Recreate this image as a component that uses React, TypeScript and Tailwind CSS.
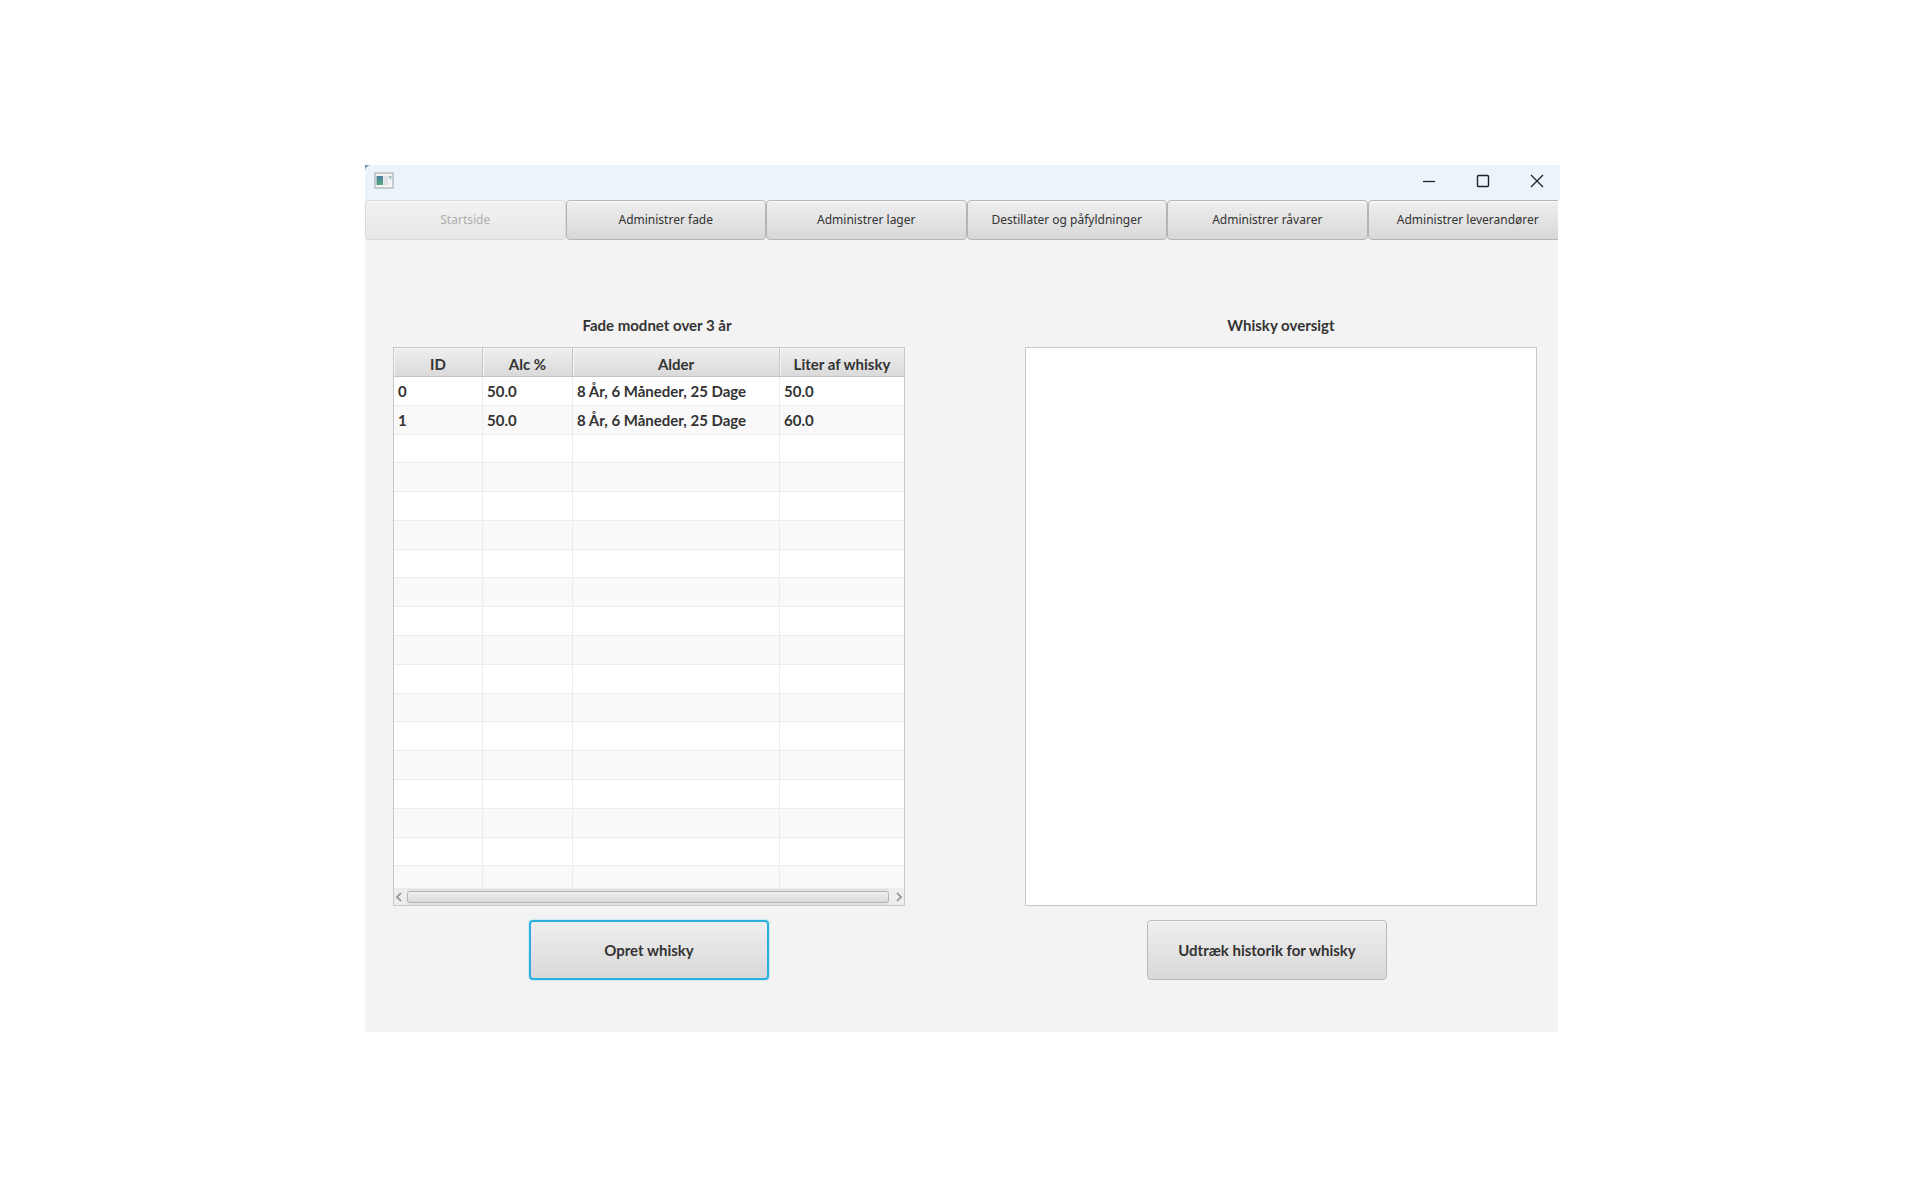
import { useState } from "react";

const tabs = [
  "Startside",
  "Administrer fade",
  "Administrer lager",
  "Destillater og påfyldninger",
  "Administrer råvarer",
  "Administrer leverandører",
];

const casks = [
  { id: "0", alc: "50.0", age: "8 År, 6 Måneder, 25 Dage", liters: "50.0" },
  { id: "1", alc: "50.0", age: "8 År, 6 Måneder, 25 Dage", liters: "60.0" },
];

const emptyRows = Array.from({ length: 16 }, (_, i) => i);

function WindowIcon() {
  return (
    <svg width="20" height="17" viewBox="0 0 20 17" aria-hidden="true">
      <defs>
        <linearGradient id="pane" x1="0" y1="0" x2="0" y2="1">
          <stop offset="0" stopColor="#4a7fa6" />
          <stop offset="1" stopColor="#58a67c" />
        </linearGradient>
      </defs>
      <rect x="1" y="1" width="18" height="15" fill="#f4f4f4" stroke="#b4b9bc" strokeWidth="1.4" />
      <rect x="2.5" y="4" width="6.5" height="9" fill="url(#pane)" />
      <rect x="9.5" y="4" width="4.5" height="9" fill="#e4e2e4" />
      <path d="M14.5 4h3v1.500l-1 2.500-1-2z" fill="#8fbfc0" />
    </svg>
  );
}

function TitleBar() {
  const control = "flex h-full w-[46px] items-center justify-center";
  return (
    <div className="bg-[#6f949c]">
      <header className="flex h-[35px] items-center justify-between rounded-tl-md bg-[#eaf4fa] pb-1 pl-[9px]">
        <WindowIcon />
        <div className="flex h-full gap-2">
          <button aria-label="Minimer" className={control}>
            <svg width="14" height="14" viewBox="0 0 14 14" fill="none" stroke="#222" strokeWidth="1.3">
              <path d="M1 7.5h12" />
            </svg>
          </button>
          <button aria-label="Maksimer" className={control}>
            <svg width="14" height="14" viewBox="0 0 14 14" fill="none" stroke="#222" strokeWidth="1.4">
              <rect x="1.500" y="1.500" width="11" height="11" rx="1" />
            </svg>
          </button>
          <button aria-label="Luk" className={control}>
            <svg width="14" height="14" viewBox="0 0 14 14" fill="none" stroke="#222" strokeWidth="1.3">
              <path d="M1 1l12 12M13 1L1 13" />
            </svg>
          </button>
        </div>
      </header>
    </div>
  );
}

function Chevron({ d }: { d: string }) {
  return (
    <svg width="6" height="10" viewBox="0 0 6 10" fill="none" stroke="#8f8f8f" strokeWidth="1.6">
      <path d={d} />
    </svg>
  );
}

function CaskTable() {
  const th = "border-r border-b border-[#c4c4c4] pt-1 pb-0 font-bold shadow-[inset_1px_1px_0_#f6f6f6] last:border-r-0";
  const td = "border-r border-b border-[#ececec] px-1 py-0 last:border-r-0";
  return (
    <div className="flex h-[559px] flex-col border border-[#c8c8c8] bg-white">
      <div className="h-[541px]">
        <table aria-labelledby="fade-title" className="h-full w-full table-fixed border-separate border-spacing-0">
          <colgroup>
            <col className="w-[89px]" />
            <col className="w-[90px]" />
            <col className="w-[207px]" />
            <col />
          </colgroup>
          <thead>
            <tr className="h-[29px] bg-linear-to-b from-[#efefef] to-[#d9d9d9]">
              <th className={th}>ID</th>
              <th className={th}>Alc %</th>
              <th className={th}>Alder</th>
              <th className={th}>Liter af whisky</th>
            </tr>
          </thead>
          <tbody>
            {casks.map((c) => (
              <tr key={c.id} className="h-7 even:bg-[#f9f9f9]">
                <td className={td}>{c.id}</td>
                <td className={td}>{c.alc}</td>
                <td className={td}>{c.age}</td>
                <td className={td}>{c.liters}</td>
              </tr>
            ))}
            {emptyRows.map((i) => (
              <tr key={i} className="h-7 even:bg-[#f9f9f9] last:h-[22px]">
                <td className={td} />
                <td className={td} />
                <td className={td} />
                <td className={td} />
              </tr>
            ))}
          </tbody>
        </table>
      </div>
      <div className="flex h-4 items-center bg-[#e2e2e2]">
        <button aria-label="Rul til venstre" className="flex h-full w-[13px] items-center justify-center bg-[#ededed] pr-1">
          <Chevron d="M5 1L1 5l4 4" />
        </button>
        <div className="h-3 flex-1 rounded-[3px] border border-[#b4b4b4] bg-linear-to-b from-[#f0f0f0] to-[#dadada]" />
        <button aria-label="Rul til højre" className="flex h-full w-[15px] items-center justify-center bg-[#ededed] pl-1">
          <Chevron d="M1 1l4 4-4 4" />
        </button>
      </div>
    </div>
  );
}

export default function App() {
  const [active, setActive] = useState("Startside");

  return (
    <div className="grid grid-cols-[365fr_1195fr_360fr] bg-white pt-[165px] pb-[168px] text-[#333]">
      <div className="col-start-2 min-w-0">
        <TitleBar />
        <div className="mr-[2px] bg-[#f3f3f3] font-['Lato',sans-serif] text-[15px] leading-5 font-bold">
          <div className="overflow-hidden">
            {/* the last tab runs out under the window edge */}
            <nav className="grid h-10 w-[calc(100%+10px)] grid-cols-6 bg-[#eaf4fa] font-['Noto_Sans',sans-serif] text-xs font-normal">
              {tabs.map((tab) => (
                <button
                  key={tab}
                  disabled={tab === active}
                  onClick={() => setActive(tab)}
                  className="rounded-[4px] border border-[#b5b5b5] bg-linear-to-b from-[#efefef] to-[#d8d8d8] shadow-[inset_0_1px_0_#fafafa] disabled:border-[#dadada] disabled:from-[#f2f2f2] disabled:to-[#e8e8e8] disabled:text-[#aeaeae]"
                >
                  {tab}
                </button>
              ))}
            </nav>
          </div>

          <main className="grid grid-cols-2 gap-[120px] pt-[75px] pr-[21px] pb-[52px] pl-7">
            <section className="flex flex-col">
              <h2 id="fade-title" className="mb-3 pl-4 text-center">
                Fade modnet over 3 år
              </h2>
              <CaskTable />
              <button className="mt-[14px] h-[60px] w-60 self-center rounded-[4px] border-2 border-[#2aaee0] bg-linear-to-b from-[#efefef] to-[#d8d8d8] shadow-[0_0_2px_#7fd0ee]">
                Opret whisky
              </button>
            </section>

            <section className="flex flex-col">
              <label htmlFor="oversigt" className="mb-3 text-center">
                Whisky oversigt
              </label>
              <textarea
                id="oversigt"
                readOnly
                className="h-[559px] resize-none border border-[#c8c8c8] bg-white p-1 outline-none"
              />
              <div className="mt-[14px] flex justify-center pr-7">
                <button className="h-[60px] w-60 rounded-[4px] border border-[#b9b9b9] bg-linear-to-b from-[#efefef] to-[#d8d8d8] shadow-[inset_0_1px_0_#fafafa]">
                  Udtræk historik for whisky
                </button>
              </div>
            </section>
          </main>
        </div>
      </div>
    </div>
  );
}
